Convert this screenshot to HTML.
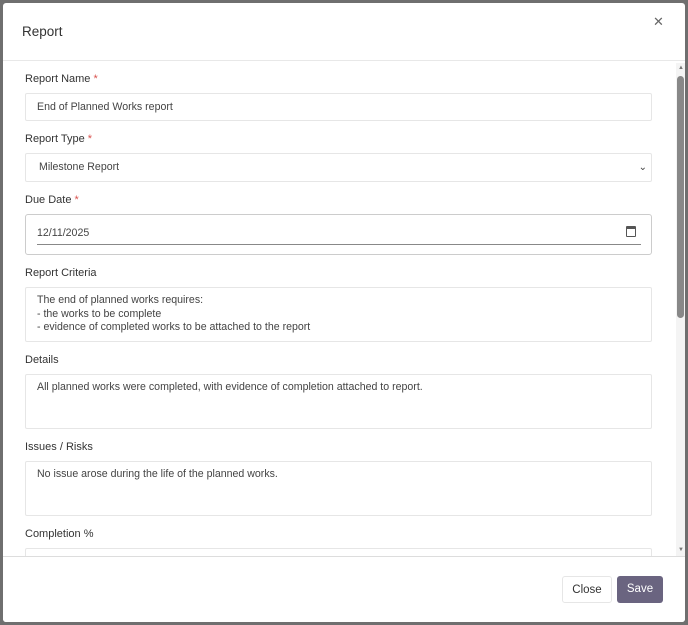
<!DOCTYPE html>
<html><head><style>
*{box-sizing:border-box;margin:0;padding:0}
body{width:688px;height:625px;background:#6f6f6f;font-family:"Liberation Sans",sans-serif;position:relative;overflow:hidden;color:#333}
.dlg{position:absolute;left:3px;top:3px;width:682px;height:619px;background:#fff;border-radius:3px;overflow:hidden}
.title{position:absolute;left:19px;top:21px;font-size:13.5px;color:#333}
.x{position:absolute;left:650px;top:11px;font-size:13px;color:#666}
.hr{position:absolute;left:0;width:682px;height:1px;background:#e8e8e8}
.lbl{position:absolute;left:22px;font-size:11px;color:#333}
.lbl i{color:#d9534f;font-style:normal}
.in{position:absolute;left:22px;width:627px;border:1px solid #e6e6e6;border-radius:2px;font-size:10.6px;color:#444;padding-left:11px;line-height:13.5px}
.sb{position:absolute;left:673px;top:60px;width:9px;height:496px;background:#f4f4f4}
.th{position:absolute;left:674px;top:73px;width:7px;height:242px;background:#888;border-radius:4px}
.btn{position:absolute;top:573px;height:27px;border-radius:3px;font-size:11.5px;line-height:27px;text-align:center}
</style></head><body>
<div class="dlg">
<div class="title">Report</div>
<div class="x">✕</div>
<div class="hr" style="top:57px"></div>
<div class="lbl" style="top:70px">Report Name <i>*</i></div>
<div class="in" style="top:90px;height:28px;line-height:26px">End of Planned Works report</div>
<div class="lbl" style="top:130px">Report Type <i>*</i></div>
<div class="in" style="top:150px;height:29px;line-height:27px;padding-left:13px">Milestone Report<span style="position:absolute;right:4px;top:0;font-size:10px">⌄</span></div>
<div class="lbl" style="top:191px">Due Date <i>*</i></div>
<div class="in" style="top:211px;height:41px;border-color:#ccc;border-radius:3px;line-height:36px">12/11/2025
<div style="position:absolute;left:11px;right:10px;top:29px;height:1px;background:#888"></div>
<div style="position:absolute;right:15px;top:11px;width:10px;height:11px;border:1.5px solid #555;border-top-width:3px;border-radius:1px"></div></div>
<div class="lbl" style="top:264px">Report Criteria</div>
<div class="in" style="top:284px;height:55px;padding-top:6px">The end of planned works requires:<br>- the works to be complete<br>- evidence of completed works to be attached to the report</div>
<div class="lbl" style="top:351px">Details</div>
<div class="in" style="top:371px;height:55px;padding-top:6px">All planned works were completed, with evidence of completion attached to report.</div>
<div class="lbl" style="top:438px">Issues / Risks</div>
<div class="in" style="top:458px;height:55px;padding-top:6px">No issue arose during the life of the planned works.</div>
<div class="lbl" style="top:525px">Completion %</div>
<div class="in" style="top:545px;height:20px"></div>
<div class="sb"></div><div class="th"></div>
<div style="position:absolute;left:675px;top:62px;font-size:6px;color:#777">▲</div>
<div style="position:absolute;left:675px;top:544px;font-size:6px;color:#777">▼</div>
<div class="hr" style="top:553px;background:#ddd"></div>
<div style="position:absolute;left:0;top:554px;width:682px;height:65px;background:#fff"></div>
<div class="btn" style="left:559px;width:50px;border:1px solid #e6e6e6;color:#333">Close</div>
<div class="btn" style="left:614px;width:46px;background:#6a6480;color:#fff">Save</div>
</div>
</body></html>
